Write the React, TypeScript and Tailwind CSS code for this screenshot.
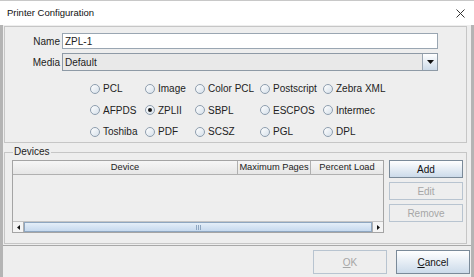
const RADIOS = [
  ["PCL", "Image", "Color PCL", "Postscript", "Zebra XML"],
  ["AFPDS", "ZPLII", "SBPL", "ESCPOS", "Intermec"],
  ["Toshiba", "PDF", "SCSZ", "PGL", "DPL"],
];

function Radio({ label, checked }: { label: string; checked?: boolean }) {
  return (
    <div className="flex items-center gap-[3px] whitespace-nowrap">
      <span className="flex h-[10px] w-[10px] items-center justify-center rounded-full border border-[#8e9eae] bg-gradient-to-br from-white to-[#d6e0ea]">
        {checked && <span className="h-[4px] w-[4px] rounded-full bg-[#1a1a1a]" />}
      </span>
      <span>{label}</span>
    </div>
  );
}

function Btn({ children, disabled, className = "" }: { children: React.ReactNode; disabled?: boolean; className?: string }) {
  return (
    <button
      className={[
        "flex items-center justify-center border",
        disabled
          ? "border-[#b8c4d0] bg-[#eeeeee] text-[#a6a6a6]"
          : "border-[#7a8a99] bg-gradient-to-b from-white to-[#ccdbea] text-[#111]",
        className,
      ].join(" ")}
    >
      {children}
    </button>
  );
}

export default function App() {
  return (
    <div className="flex h-[277px] w-[474px] flex-col overflow-hidden bg-[#eeeeee] text-[10px] text-[#222] [font-family:'Liberation_Sans',Arial,sans-serif]">
      {/* Title bar */}
      <div className="flex h-[25px] shrink-0 items-center justify-between border-t border-[#c8c8c8] bg-white pl-[7px] pr-[8px]">
        <span className="text-[9.5px] text-[#111]">Printer Configuration</span>
        <svg width="9" height="9" viewBox="0 0 9 9" className="mr-[1px]">
          <path d="M0.5 0.5 L8.5 8.5 M8.5 0.5 L0.5 8.5" stroke="#333" strokeWidth="1" />
        </svg>
      </div>

      <div className="flex flex-1 flex-col border-x-[3px] border-[#b4b4b4]">
        {/* Top panel */}
        <div className="ml-[1px] mt-[1px] h-[117px] w-[463px] border border-[#c6c6c6]">
          <div className="mt-[6px] flex items-center">
            <span className="w-[57px] pr-[2px] text-right">Name</span>
            <div className="flex h-[16px] w-[376px] items-center border border-[#9aa6b2] bg-white pl-[2px]">ZPL-1</div>
          </div>
          <div className="mt-[4px] flex items-center">
            <span className="w-[57px] pr-[2px] text-right">Media</span>
            <div className="flex h-[18px] w-[376px] items-center border border-[#8e9aa6] bg-[#e9e9e9]">
              <span className="flex-1 pl-[2px]">Default</span>
              <span className="flex h-full w-[15px] items-center justify-center border-l border-[#9aa6b2] bg-gradient-to-b from-white to-[#cddbe9]">
                <svg width="7" height="4" viewBox="0 0 7 4">
                  <path d="M0 0 H7 L3.5 4 Z" fill="#111" />
                </svg>
              </span>
            </div>
          </div>
          <div className="mt-[7px] pl-[85px]">
            {RADIOS.map((row, r) => (
              <div key={r} className="grid h-[21.5px] grid-cols-[55px_50px_65px_63px_auto] items-center">
                {row.map((l) => (
                  <Radio key={l} label={l} checked={l === "ZPLII"} />
                ))}
              </div>
            ))}
          </div>
        </div>

        {/* Devices */}
        <fieldset className="ml-[1px] mt-[3px] h-[98px] w-[463px] border border-[#c6c6c6] pl-[7px] pr-[3px]">
          <legend className="ml-[1px] px-[1px] text-[10px] leading-[12px]">Devices</legend>
          <div className="mt-[2px] flex">
            <div className="flex h-[73px] w-[372px] flex-col border border-[#a4a4a4] bg-[#eeeeee]">
              <div className="flex h-[14px] whitespace-nowrap border-b border-[#b0b0b0] bg-gradient-to-b from-[#f6f6f6] to-[#e6e6e6] text-[9.3px]">
                <div className="flex w-[225px] items-center justify-center border-r border-[#b0b0b0]">Device</div>
                <div className="flex w-[73px] items-center justify-center border-r border-[#b0b0b0]">Maximum Pages</div>
                <div className="flex flex-1 items-center justify-center">Percent Load</div>
              </div>
              <div className="flex-1" />
              <div className="flex h-[11px] border-t border-[#c4c4c4]">
                <div className="flex w-[11px] items-center justify-center border-r border-[#b0b0b0] bg-[#f4f4f4]">
                  <svg width="3" height="5" viewBox="0 0 3 5"><path d="M3 0 V5 L0 2.5 Z" fill="#111" /></svg>
                </div>
                <div className="flex flex-1 items-center justify-center border border-[#8ea6c0] bg-gradient-to-b from-[#e4eef8] to-[#c6d9ee]">
                  <div className="flex gap-[1px]">
                    <span className="h-[5px] w-[1px] bg-[#8ea6c0]" />
                    <span className="h-[5px] w-[1px] bg-[#8ea6c0]" />
                    <span className="h-[5px] w-[1px] bg-[#8ea6c0]" />
                  </div>
                </div>
                <div className="flex w-[11px] items-center justify-center border-l border-[#b0b0b0] bg-[#f4f4f4]">
                  <svg width="3" height="5" viewBox="0 0 3 5"><path d="M0 0 V5 L3 2.5 Z" fill="#111" /></svg>
                </div>
              </div>
            </div>
            <div className="ml-[5px] flex w-[74px] flex-col gap-[4px]">
              <Btn className="h-[18px]">Add</Btn>
              <Btn disabled className="h-[18px]">Edit</Btn>
              <Btn disabled className="h-[18px]">Remove</Btn>
            </div>
          </div>
        </fieldset>

        {/* Bottom buttons */}
        <div className="mt-[1px] flex flex-1 items-start justify-end gap-[9px] border-t border-[#a8a8a8] pr-[1px] pt-[4px]">
          <Btn disabled className="h-[24px] w-[74px]">
            <span className="underline">O</span>K
          </Btn>
          <Btn className="h-[24px] w-[74px]">
            <span className="underline">C</span>ancel
          </Btn>
        </div>
      </div>
    </div>
  );
}
